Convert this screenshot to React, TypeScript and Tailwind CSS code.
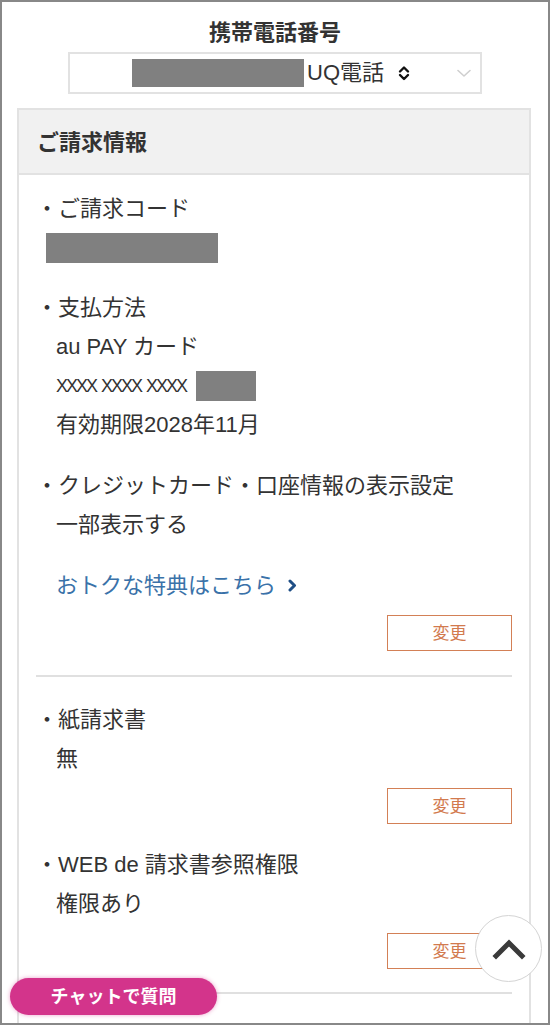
import React from "react";

const FONT = { fontFamily: '"Liberation Sans", "Noto Sans CJK JP", "Noto Sans", sans-serif' };

function Line({ children, className = "" }: { children: React.ReactNode; className?: string }) {
  return <div className={`h-[39px] flex items-center ${className}`}>{children}</div>;
}

function Label({ text }: { text: string }) {
  return (
    <Line>
      <span>・{text}</span>
    </Line>
  );
}

function Value({ children }: { children: React.ReactNode }) {
  return <Line className="pl-[20px]">{children}</Line>;
}

function ChangeButton() {
  return (
    <div className="flex justify-end">
      <button className="w-[125px] h-[36px] border-[1.5px] border-[#d38056] bg-white text-[#d27a4e] text-[17px] leading-none flex items-center justify-center">
        変更
      </button>
    </div>
  );
}

function Divider() {
  return <div className="h-[2px] bg-[#e0e0e0]" />;
}

export default function App() {
  return (
    <div
      className="relative w-[550px] h-[1025px] overflow-hidden border-2 border-[#888888] bg-white text-[#333333]"
      style={FONT}
    >
      <div className="pt-[16px] text-center text-[22px] font-bold leading-[30px] text-[#333333]">
        携帯電話番号
      </div>
      <div className="mt-[4px] mx-auto w-[414px] h-[42px] border-2 border-[#e2e2e2] flex items-center">
        <div className="ml-[62px] w-[172px] h-[28px] bg-[#808080]" />
        <span className="ml-[3px] text-[22px] leading-none text-[#333333]">UQ電話</span>
        <svg className="ml-[13px]" width="14" height="18" viewBox="0 0 14 18" fill="none">
          <path d="M3 7.5 L7 3.5 L11 7.5" stroke="#111" strokeWidth="2.4" strokeLinecap="round" strokeLinejoin="round" />
          <path d="M3 11 L7 15 L11 11" stroke="#111" strokeWidth="2.4" strokeLinecap="round" strokeLinejoin="round" />
        </svg>
        <svg className="ml-[46px]" width="14" height="9" viewBox="0 0 14 9" fill="none">
          <path d="M1 1.5 L7 7 L13 1.5" stroke="#cfcfcf" strokeWidth="1.6" strokeLinecap="round" strokeLinejoin="round" />
        </svg>
      </div>

      <div className="mt-[14px] ml-[15px] w-[514px] border-2 border-[#e2e2e2] bg-white">
        <div className="h-[65px] bg-[#f1f1f1] border-b-2 border-[#e2e2e2] flex items-center pl-[18px] pt-[2px] text-[22px] font-bold">
          ご請求情報
        </div>
        <div className="px-[17px] pt-[14px] text-[22px] leading-none">
          <Label text="ご請求コード" />
          <Line>
            <div className="ml-[10px] w-[172px] h-[30px] bg-[#808080]" />
          </Line>

          <div className="mt-[21px]">
            <Label text="支払方法" />
            <Value>au PAY カード</Value>
            <Value>
              <span className="text-[18px] tracking-[-2px] [word-spacing:2px]">XXXX XXXX XXXX</span>
              <div className="ml-[10px] w-[60px] h-[30px] bg-[#808080]" />
            </Value>
            <Value>有効期限2028年11月</Value>
          </div>

          <div className="mt-[22px]">
            <Label text="クレジットカード・口座情報の表示設定" />
            <Value>一部表示する</Value>
          </div>

          <div className="mt-[22px]">
            <Value>
              <span className="text-[#3a72a9]">おトクな特典はこちら</span>
              <svg className="ml-[12px]" width="9" height="13" viewBox="0 0 9 13" fill="none">
                <path d="M2 2 L6.5 6.5 L2 11" stroke="#1f4f86" strokeWidth="3" strokeLinecap="round" strokeLinejoin="round" />
              </svg>
            </Value>
          </div>

          <div className="mt-[10px]">
            <ChangeButton />
          </div>
          <div className="mt-[24px]">
            <Divider />
          </div>

          <div className="mt-[23px]">
            <Label text="紙請求書" />
            <Value>無</Value>
          </div>
          <div className="mt-[10px]">
            <ChangeButton />
          </div>

          <div className="mt-[21px]">
            <Label text="WEB de 請求書参照権限" />
            <Value>権限あり</Value>
          </div>
          <div className="mt-[10px]">
            <ChangeButton />
          </div>
          <div className="mt-[23px]">
            <Divider />
          </div>
          <div className="h-[200px]" />
        </div>
      </div>

      <div className="absolute left-[473px] top-[913px] w-[67px] h-[67px] rounded-full bg-white border-[1.5px] border-[#d4d4d4] flex items-center justify-center">
        <svg width="34" height="22" viewBox="0 0 34 22" fill="none">
          <path d="M4 18 L17 5 L30 18" stroke="#3a3a3a" strokeWidth="5" strokeLinecap="square" strokeLinejoin="miter" />
        </svg>
      </div>

      <div className="absolute left-[8px] top-[976px] w-[207px] h-[37px] rounded-full bg-[#d3348b] shadow-[0_0_4px_rgba(211,52,139,0.45)] flex items-center justify-center">
        <span className="text-white text-[18px] font-bold leading-none">チャットで質問</span>
      </div>
    </div>
  );
}
